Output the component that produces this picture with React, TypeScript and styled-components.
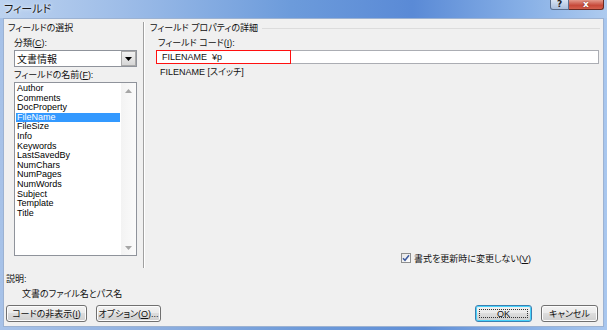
import styled, { createGlobalStyle } from 'styled-components';

const GlobalStyle = createGlobalStyle`
	html, body {
		margin: 0;
		padding: 0;
		background: #fff;
	}
	body {
		font-family: "Liberation Sans", "Noto Sans CJK JP", sans-serif;
		font-feature-settings: "palt";
		color: #000;
	}
`;

const fields = [
	'Author', 'Comments', 'DocProperty', 'FileName', 'FileSize', 'Info', 'Keywords',
	'LastSavedBy', 'NumChars', 'NumPages', 'NumWords', 'Subject', 'Template', 'Title',
];

const App = () => {
	return (
		<>
			<GlobalStyle />
			<Window>
				<TitleBar>
					<Title>フィールド</Title>
					<CaptionButtons>
						<HelpBtn>?</HelpBtn>
						<CloseBtn>x</CloseBtn>
					</CaptionButtons>
				</TitleBar>
				<Client>
					<Top>
						<LeftCol>
							<GroupHead>フィールドの選択</GroupHead>
							<Label $gap={3}>分類(<u>C</u>):</Label>
							<Combo>
								<ComboText>文書情報</ComboText>
								<ComboBtn>
									<svg width="7" height="4" viewBox="0 0 7 4"><path d="M0 0h7L3.5 4z" fill="#000" /></svg>
								</ComboBtn>
							</Combo>
							<Label $gap={0}>フィールドの名前(<u>F</u>):</Label>
							<ListBox>
								<Items>
									{fields.map((f) => (
										<Item key={f} $selected={f === 'FileName'}>{f}</Item>
									))}
								</Items>
								<ScrollBar>
									<svg width="7" height="4" viewBox="0 0 7 4"><path d="M0 4h7L3.5 0z" fill="#a6a6a6" /></svg>
									<svg width="7" height="4" viewBox="0 0 7 4"><path d="M0 0h7L3.5 4z" fill="#a6a6a6" /></svg>
								</ScrollBar>
							</ListBox>
						</LeftCol>
						<Separator />
						<RightCol>
							<HeadRow>
								<GroupHead $flush>フィールド プロパティの詳細</GroupHead>
								<HeadLine />
							</HeadRow>
							<SubLabel>フィールド コード(<u>I</u>):</SubLabel>
							<TextBox>
								FILENAME&nbsp;&nbsp;¥p
								<Mark />
							</TextBox>
							<Syntax>FILENAME [スイッチ]</Syntax>
							<CheckRow>
								<CheckBox>
									<svg width="8" height="8" viewBox="0 0 8 8">
										<path d="M1 4.2 L3 6.3 L7 1.2" stroke="#3d5a9e" strokeWidth="1.5" fill="none" />
									</svg>
								</CheckBox>
								<span>書式を更新時に変更しない(<u>V</u>)</span>
							</CheckRow>
						</RightCol>
					</Top>
					<DescLabel>説明:</DescLabel>
					<DescText>文書のファイル名とパス名</DescText>
					<ButtonRow>
						<Button $w={81}>コードの非表示(<u>I</u>)</Button>
						<Button $w={65}>オプション(<u>O</u>)...</Button>
						<Spacer />
						<Button $w={57} $default>
							<Focus>OK</Focus>
						</Button>
						<Button $w={57}>キャンセル</Button>
					</ButtonRow>
				</Client>
			</Window>
		</>
	);
};
export default App;

const Window = styled.div`
	width: 607px;
	height: 330px;
	display: flex;
	flex-direction: column;
	overflow: hidden;
	background: linear-gradient(90deg, #a7c2e8 0%, #8fb0e0 25%, #6d9ad9 50%, #5f8fd7 70%, #8db3e6 88%, #a9c7ee 100%);
`;

const TitleBar = styled.div`
	height: 18px;
	display: flex;
	align-items: flex-start;
	padding-left: 4px;
	background: linear-gradient(90deg, #bcd2ef 0%, #9ebde8 20%, #6c9bdb 48%, #5a8ad6 68%, #86afe6 86%, #aecbef 100%);
`;

const Title = styled.div`
	font-size: 11px;
	line-height: 18px;
	color: #1a1a1a;
	text-shadow: 0 0 4px #e8f0fb, 0 0 2px #e8f0fb;
`;

const CaptionButtons = styled.div`
	margin-left: auto;
	margin-right: 3px;
	display: flex;
	height: 10px;
`;

const HelpBtn = styled.div`
	width: 19px;
	height: 10px;
	border: 1px solid #5a6f8f;
	border-top: none;
	border-radius: 0 0 0 3px;
	box-sizing: border-box;
	background: linear-gradient(#d7e3f3, #a9bedd);
	color: #222;
	font: bold 9px/9px "DejaVu Sans", sans-serif;
	text-align: center;
`;

const CloseBtn = styled.div`
	width: 35px;
	height: 10px;
	border: 1px solid #6b2a22;
	border-top: none;
	border-left: none;
	border-radius: 0 0 3px 0;
	box-sizing: border-box;
	background: linear-gradient(#e39a8c, #c7493a 60%, #d4604d);
	color: #fff;
	font: bold 9px/8px "DejaVu Sans", sans-serif;
	text-align: center;
	text-shadow: 0 0 2px #6b2a22;
`;

const Client = styled.div`
	flex: 1;
	margin: 0 3px 3px 3px;
	border: 1px solid #9cb2d2;
	background: #f0f0f0;
	display: flex;
	flex-direction: column;
	font-size: 9px;
	color: #111;
`;

const Top = styled.div`
	height: 249px;
	display: flex;
`;

const LeftCol = styled.div`
	width: 139px;
	display: flex;
	flex-direction: column;
	padding-top: 3px;
	box-sizing: border-box;
`;

const GroupHead = styled.div<{ $flush?: boolean }>`
	height: 12px;
	line-height: 12px;
	padding-left: ${(p) => (p.$flush ? 0 : 4)}px;
	white-space: nowrap;
`;

const Label = styled.div<{ $gap: number }>`
	height: 12px;
	line-height: 12px;
	margin-top: ${(p) => p.$gap}px;
	padding-left: 10px;
`;

const Combo = styled.div`
	margin: 1px 0 2px 10px;
	width: 123px;
	height: 17px;
	box-sizing: border-box;
	border: 1px solid #8f939b;
	background: #fff;
	display: flex;
	align-items: center;
`;

const ComboText = styled.div`
	flex: 1;
	padding-left: 2px;
	font-size: 10px;
`;

const ComboBtn = styled.div`
	width: 15px;
	height: 15px;
	box-sizing: border-box;
	border: 1px solid #a9a9a9;
	background: linear-gradient(#f2f2f2, #d6d6d6);
	display: flex;
	align-items: center;
	justify-content: center;
`;

const ListBox = styled.div`
	margin: 1px 0 0 10px;
	width: 123px;
	height: 174px;
	box-sizing: border-box;
	border: 1px solid #8f939b;
	background: #fff;
	display: flex;
`;

const Items = styled.div`
	flex: 1;
	padding: 1px 1px 0 1px;
`;

const Item = styled.div<{ $selected?: boolean }>`
	height: 9.6px;
	line-height: 9.6px;
	padding-left: 1px;
	background: ${(p) => (p.$selected ? '#3399ff' : 'transparent')};
	color: ${(p) => (p.$selected ? '#fff' : '#000')};
`;

const ScrollBar = styled.div`
	width: 15px;
	background: linear-gradient(90deg, #f3f3f3, #fbfbfb);
	display: flex;
	flex-direction: column;
	justify-content: space-between;
	align-items: center;
	padding: 6px 0 5px;
`;

const Separator = styled.div`
	margin-top: 3px;
	width: 1px;
	height: 246px;
	background: #a0a0a0;
	border-right: 1px solid #fff;
`;

const RightCol = styled.div`
	flex: 1;
	display: flex;
	flex-direction: column;
	padding-top: 3px;
	box-sizing: border-box;
`;

const HeadRow = styled.div`
	display: flex;
	align-items: center;
	padding-left: 5px;
`;

const HeadLine = styled.div`
	flex: 1;
	height: 1px;
	margin: 1px 3px 0 4px;
	background: #dcdcdc;
`;

const SubLabel = styled.div`
	height: 12px;
	line-height: 12px;
	margin: 3px 0 0 13px;
`;

const TextBox = styled.div`
	position: relative;
	margin: 1px 0 0 11px;
	width: 443px;
	height: 14px;
	box-sizing: border-box;
	border: 1px solid #abadb3;
	background: #fff;
	padding-left: 5px;
	line-height: 12px;
	white-space: nowrap;
`;

const Mark = styled.div`
	position: absolute;
	top: -1px;
	left: -1px;
	width: 135px;
	height: 14px;
	box-sizing: border-box;
	border: 1px solid #ff1010;
`;

const Syntax = styled.div`
	height: 12px;
	line-height: 12px;
	margin: 2px 0 0 15px;
`;

const CheckRow = styled.div`
	margin: auto 0 4px 256px;
	height: 12px;
	display: flex;
	align-items: center;
	gap: 3px;
`;

const CheckBox = styled.div`
	width: 10px;
	height: 10px;
	box-sizing: border-box;
	border: 1px solid #8e8f8f;
	background: linear-gradient(135deg, #e6e6e6, #fff);
	display: flex;
	align-items: center;
	justify-content: center;
`;

const DescLabel = styled.div`
	height: 12px;
	line-height: 12px;
	margin: 5px 0 0 2px;
`;

const DescText = styled.div`
	height: 12px;
	line-height: 12px;
	margin: 3px 0 0 18px;
`;

const ButtonRow = styled.div`
	margin-top: 5px;
	display: flex;
	gap: 9px;
	padding: 0 5px 0 2px;
`;

const Spacer = styled.div`
	flex: 1;
`;

const Button = styled.div<{ $w: number; $default?: boolean }>`
	width: ${(p) => p.$w}px;
	height: 17px;
	box-sizing: border-box;
	border: 1px solid ${(p) => (p.$default ? '#3c7fb1' : '#707070')};
	border-radius: 3px;
	background: linear-gradient(#f2f2f2 0%, #ebebeb 45%, #dddddd 50%, #cfcfcf 100%);
	box-shadow: inset 0 0 0 1px ${(p) => (p.$default ? '#48d3fb' : '#fcfcfc')};
	display: flex;
	align-items: center;
	justify-content: center;
	white-space: nowrap;
	line-height: 12px;
`;

const Focus = styled.div`
	width: calc(100% - 6px);
	height: calc(100% - 6px);
	border: 1px dotted #333;
	box-sizing: border-box;
	display: flex;
	align-items: center;
	justify-content: center;
`;
